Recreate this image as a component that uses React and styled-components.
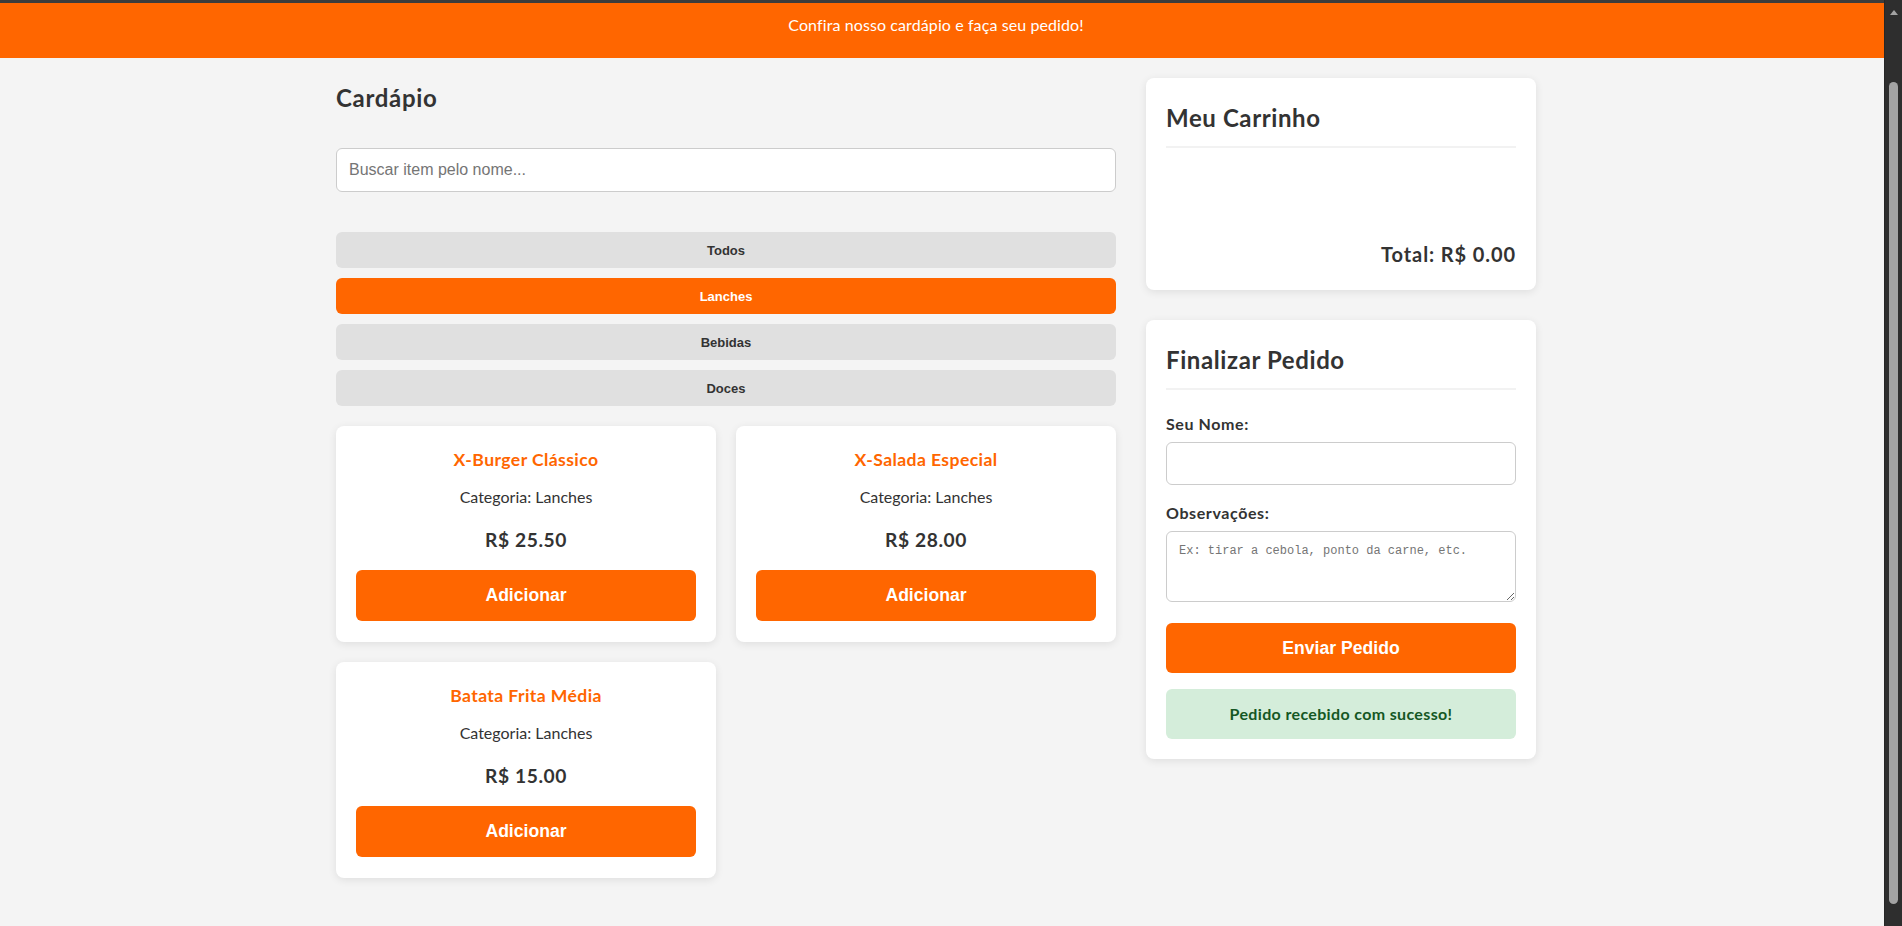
import React from 'react';
import styled, { createGlobalStyle } from 'styled-components';

const GlobalStyle = createGlobalStyle`
  * { box-sizing: border-box; }
  html { background: #f4f4f4; }
  body {
    margin: 0;
    background: #f4f4f4;
    border-top: 3px solid #3c3c3c;
    font-family: "Segoe UI", Lato, "Noto Sans", sans-serif;
    color: #333;
  }
`;

const ORANGE = '#ff6600';

const TopBar = styled.header`
  background: ${ORANGE};
  color: #fff;
  height: 55px;
  padding: 12px 30px 0 0;
  font-size: 16px;
  line-height: 20px;
  letter-spacing: 0.1px;
  text-align: center;
`;

const Page = styled.main`
  padding: 20px 30px 40px 0;
`;

const Layout = styled.div`
  max-width: 1200px;
  margin: 0 auto;
  display: grid;
  grid-template-columns: 1fr 390px;
  gap: 30px;
  align-items: start;
`;

const MenuSection = styled.section`
  display: flex;
  flex-direction: column;
`;

const SectionTitle = styled.h2`
  margin: 4px 0 34px;
  font-size: 24px;
  line-height: 32px;
  font-weight: 700;
  letter-spacing: 0.7px;
  color: #333;
`;

const SearchInput = styled.input`
  width: 100%;
  height: 43.5px;
  padding: 0 12px;
  border: 1px solid #ccc;
  border-radius: 6px;
  background: #fff;
  font-family: "Liberation Sans", Arial, sans-serif;
  font-size: 16px;
  color: #333;
  margin-bottom: 40.5px;
  outline: none;
  &::placeholder { color: #757575; }
`;

const CategoryList = styled.div`
  display: flex;
  flex-direction: column;
  gap: 10px;
  margin-bottom: 20px;
`;

const CategoryButton = styled.button`
  height: 36px;
  border: none;
  border-radius: 6px;
  background: ${(p) => (p.$active ? ORANGE : '#e0e0e0')};
  color: ${(p) => (p.$active ? '#fff' : '#333')};
  font-family: "Liberation Sans", Arial, sans-serif;
  font-size: 13px;
  font-weight: 700;
  cursor: pointer;
`;

const ProductGrid = styled.div`
  display: grid;
  grid-template-columns: repeat(2, 1fr);
  gap: 20px;
`;

const Card = styled.div`
  background: #fff;
  border-radius: 8px;
  box-shadow: 0 2px 8px rgba(0, 0, 0, 0.09);
`;

const ProductCard = styled(Card)`
  padding: 22px 20px 21px;
  display: flex;
  flex-direction: column;
  text-align: center;
`;

const ProductName = styled.h3`
  margin: 0 0 15px;
  font-size: 17.6px;
  line-height: 24px;
  font-weight: 700;
  letter-spacing: 0.4px;
  color: ${ORANGE};
`;

const ProductCategory = styled.p`
  margin: 0 0 21px;
  font-size: 16px;
  line-height: 20px;
  color: #333;
`;

const ProductPrice = styled.p`
  margin: 0 0 18px;
  font-size: 19.2px;
  line-height: 24px;
  font-weight: 700;
  letter-spacing: 0.6px;
  color: #333;
`;

const PrimaryButton = styled.button`
  width: 100%;
  height: ${(p) => p.$h || 51}px;
  border: none;
  border-radius: 6px;
  background: ${ORANGE};
  color: #fff;
  font-family: "Liberation Sans", Arial, sans-serif;
  font-size: 17.6px;
  font-weight: 700;
  cursor: pointer;
`;

const Sidebar = styled.aside`
  display: flex;
  flex-direction: column;
  gap: 30px;
`;

const Panel = styled(Card)`
  padding: 20px;
`;

const PanelTitle = styled.h2`
  margin: 4px 0 0;
  padding-bottom: 12px;
  border-bottom: 2px solid #f2f2f2;
  font-size: 24px;
  line-height: 32px;
  font-weight: 700;
  letter-spacing: 0.6px;
  color: #333;
`;

const CartItems = styled.div`
  min-height: 94px;
`;

const Total = styled.p`
  margin: 0 0 4px;
  text-align: right;
  font-size: 20px;
  line-height: 24px;
  font-weight: 700;
  letter-spacing: 0.9px;
  color: #333;
`;

const Form = styled.form`
  margin-top: 23.5px;
  display: flex;
  flex-direction: column;
`;

const FormGroup = styled.div`
  margin-bottom: ${(p) => p.$mb}px;
`;

const Label = styled.label`
  display: block;
  margin-bottom: 8px;
  font-size: 16px;
  line-height: 20px;
  font-weight: 700;
  letter-spacing: 0.6px;
  color: #333;
`;

const TextInput = styled.input`
  display: block;
  width: 100%;
  height: 43px;
  padding: 0 12px;
  border: 1px solid #ccc;
  border-radius: 6px;
  font-family: "Liberation Sans", Arial, sans-serif;
  font-size: 16px;
  outline: none;
`;

const TextArea = styled.textarea`
  display: block;
  width: 100%;
  height: 71px;
  padding: 12px;
  border: 1px solid #ccc;
  border-radius: 6px;
  font-family: "Liberation Mono", "DejaVu Sans Mono", monospace;
  font-size: 12px;
  line-height: 15px;
  resize: vertical;
  outline: none;
  &::placeholder { color: #757575; }
`;

const SuccessMessage = styled.div`
  margin-top: 16px;
  padding: 15px;
  border-radius: 6px;
  background: #d4edda;
  color: #155724;
  font-size: 16px;
  line-height: 20px;
  font-weight: 700;
  letter-spacing: 0.35px;
  text-align: center;
`;

/* window scrollbar as it appears in the screenshot, overlaid on the right edge */
const ScrollTrack = styled.div`
  position: fixed;
  top: 0;
  right: 0;
  width: 18px;
  height: 100vh;
  background: #2e2e2e;
  border-left: 1px solid #262626;
  display: flex;
  flex-direction: column;
  align-items: center;
  padding-top: 10px;
`;

const ScrollArrow = styled.div`
  width: 0;
  height: 0;
  border-left: 4px solid transparent;
  border-right: 4px solid transparent;
  border-bottom: 5px solid #a3a3a3;
`;

const ScrollThumb = styled.div`
  margin-top: 67px;
  width: 9px;
  height: 822px;
  border-radius: 5px;
  background: #a3a3a3;
`;

const categories = ['Todos', 'Lanches', 'Bebidas', 'Doces'];

const products = [
  { name: 'X-Burger Clássico', category: 'Lanches', price: 25.5 },
  { name: 'X-Salada Especial', category: 'Lanches', price: 28.0 },
  { name: 'Batata Frita Média', category: 'Lanches', price: 15.0 },
];

export default function App() {
  const [active, setActive] = React.useState('Lanches');
  return (
    <>
      <GlobalStyle />
      <TopBar>Confira nosso cardápio e faça seu pedido!</TopBar>
      <Page>
        <Layout>
          <MenuSection>
            <SectionTitle>Cardápio</SectionTitle>
            <SearchInput placeholder="Buscar item pelo nome..." />
            <CategoryList>
              {categories.map((c) => (
                <CategoryButton key={c} $active={c === active} onClick={() => setActive(c)}>
                  {c}
                </CategoryButton>
              ))}
            </CategoryList>
            <ProductGrid>
              {products.map((p) => (
                <ProductCard key={p.name}>
                  <ProductName>{p.name}</ProductName>
                  <ProductCategory>Categoria: {p.category}</ProductCategory>
                  <ProductPrice>R$ {p.price.toFixed(2)}</ProductPrice>
                  <PrimaryButton type="button">Adicionar</PrimaryButton>
                </ProductCard>
              ))}
            </ProductGrid>
          </MenuSection>
          <Sidebar>
            <Panel>
              <PanelTitle>Meu Carrinho</PanelTitle>
              <CartItems />
              <Total>Total: R$ 0.00</Total>
            </Panel>
            <Panel>
              <PanelTitle>Finalizar Pedido</PanelTitle>
              <Form onSubmit={(e) => e.preventDefault()}>
                <FormGroup $mb={18.5}>
                  <Label htmlFor="nome">Seu Nome:</Label>
                  <TextInput id="nome" type="text" />
                </FormGroup>
                <FormGroup $mb={21}>
                  <Label htmlFor="obs">Observações:</Label>
                  <TextArea id="obs" placeholder="Ex: tirar a cebola, ponto da carne, etc." />
                </FormGroup>
                <PrimaryButton type="submit" $h={50}>Enviar Pedido</PrimaryButton>
                <SuccessMessage>Pedido recebido com sucesso!</SuccessMessage>
              </Form>
            </Panel>
          </Sidebar>
        </Layout>
      </Page>
      <ScrollTrack aria-hidden="true">
        <ScrollArrow />
        <ScrollThumb />
      </ScrollTrack>
    </>
  );
}
